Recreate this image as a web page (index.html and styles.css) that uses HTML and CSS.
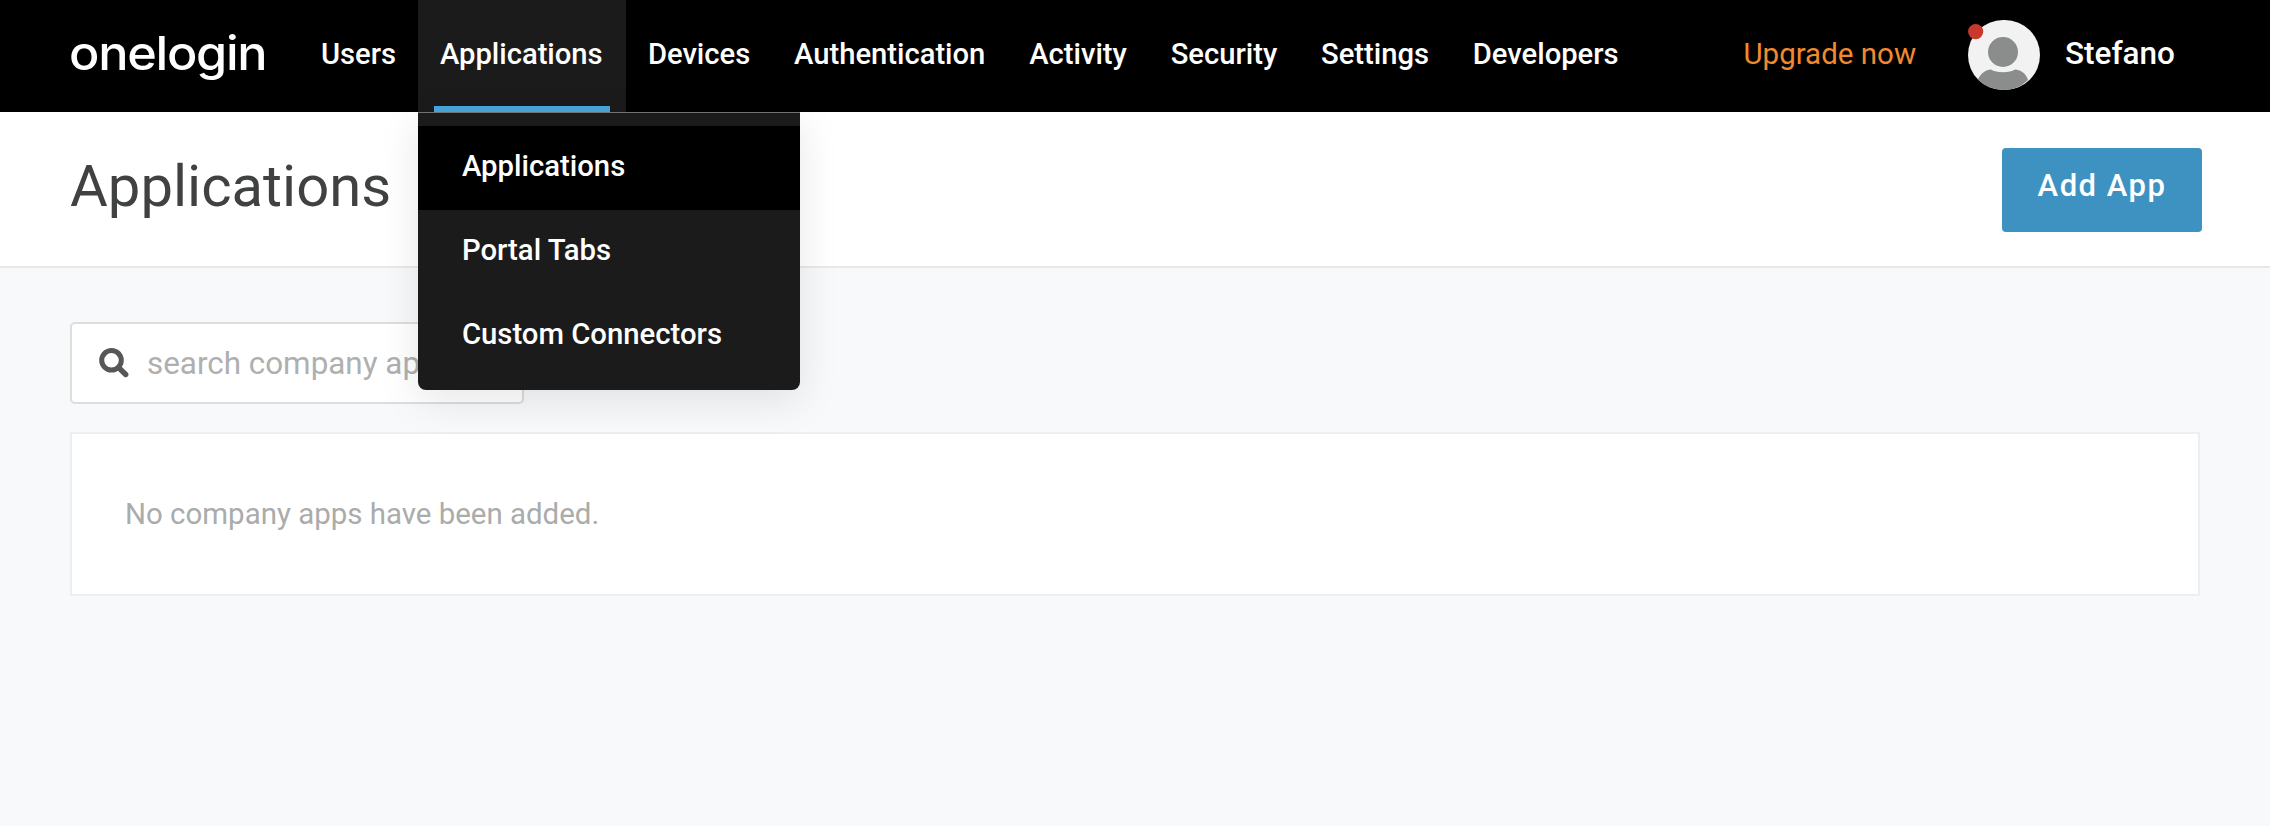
FILE: index.html
```html
<!DOCTYPE html>
<html lang="en">
<head>
<meta charset="utf-8">
<title>Applications</title>
<link rel="stylesheet" href="styles.css">
</head>
<body>
<header class="topbar">
  <a class="logo">onelogin</a>
  <nav class="nav">
    <a class="nav-item">Users</a>
    <div class="nav-item active">Applications
      <div class="menu">
        <a class="menu-item selected">Applications</a>
        <a class="menu-item">Portal Tabs</a>
        <a class="menu-item">Custom Connectors</a>
      </div>
    </div>
    <a class="nav-item">Devices</a>
    <a class="nav-item">Authentication</a>
    <a class="nav-item">Activity</a>
    <a class="nav-item">Security</a>
    <a class="nav-item">Settings</a>
    <a class="nav-item">Developers</a>
  </nav>
  <div class="account">
    <a class="upgrade">Upgrade now</a>
    <svg class="avatar" viewBox="0 0 72 70" width="72" height="70">
      <clipPath id="round"><rect width="72" height="70" rx="35"/></clipPath>
      <g clip-path="url(#round)">
        <rect width="72" height="70" fill="#f2f2f2"/>
        <circle cx="35" cy="32" r="15" fill="#8b8d8c"/>
        <path d="M9.500 60C13 53 18 49.500 23 49.500C28 53 42 53 47 49.500C52 49.500 58 53 60 60C54 66 46 70 36 71C24 71 16 68 9.500 60Z" fill="#8b8d8c"/>
      </g>
      <circle cx="7.700" cy="11.600" r="7.600" fill="#c73a2b"/>
    </svg>
    <span class="user">Stefano</span>
  </div>
</header>
<section class="heading">
  <h1 class="title">Applications</h1>
  <button class="add">Add App</button>
</section>
<main class="content">
  <div class="search">
    <svg width="30" height="30" viewBox="0 0 30 30"><circle cx="12.500" cy="12.300" r="9.800" fill="none" stroke="#555857" stroke-width="5"/><path d="M19.500 19.500L26.700 26.500" stroke="#555857" stroke-width="5.400" stroke-linecap="round"/></svg>
    <span class="placeholder">search company apps</span>
  </div>
  <div class="panel">No company apps have been added.</div>
</main>
</body>
</html>
```
FILE: styles.css
```css
* { box-sizing: border-box; }
body { margin: 0; min-height: 826px; background: #f8f9fb; font-family: Roboto, sans-serif; overflow: hidden; }
.topbar { display: flex; height: 112px; background: #000; color: #fff; padding: 0 95px 0 69px; }
.logo { width: 230px; font: 500 47px/105px Inter, sans-serif; letter-spacing: -1.2px; white-space: nowrap; transform: scaleX(1.072); transform-origin: 0 50%; }
.nav { display: flex; }
.nav-item { position: relative; padding: 0 21.800px 0 22px; font-size: 29.200px; line-height: 108px; font-weight: 500; white-space: nowrap; }
.active { width: 208px; background: #1b1b1b; }
.active::after { content: ""; position: absolute; left: 16px; right: 16px; top: 106px; height: 6px; background: #48a7dc; }
.menu { position: absolute; z-index: 2; left: 0; top: 112px; width: 382px; height: 278px; padding-top: 13px; background: #1b1b1b; border-top: 1px solid #737373; border-radius: 0 0 8px 8px; box-shadow: 0 10px 40px rgba(0, 0, 0, 0.1); }
.menu-item { display: block; height: 84px; padding-left: 44px; font-size: 29.300px; line-height: 80px; }
.selected { background: #000; }
.account { display: flex; margin-left: auto; }
.upgrade { color: #f18a2f; font-size: 29.500px; line-height: 108px; margin-right: 52px; }
.avatar { margin-top: 20px; }
.user { font-size: 31.500px; font-weight: 500; line-height: 107px; margin-left: 25px; }
.heading { display: flex; justify-content: space-between; height: 156px; padding: 36px 68px 0 70px; background: #fff; border-bottom: 2px solid #e8e8e8; }
.title { margin: 0; color: #404241; font-size: 58px; line-height: 76px; font-weight: 400; }
.add { width: 200px; height: 84px; border: 0; border-radius: 4px; padding: 0 0 9px; background: #3e92c1; color: #fff; font: 500 31px Roboto, sans-serif; letter-spacing: 1.5px; }
.content { padding: 54px 70px 0; }
.search { display: flex; align-items: center; width: 454px; height: 82px; padding-left: 27px; gap: 18px; border: 2px solid #dcdddd; border-radius: 5px; background: #fff; }
.placeholder { color: #aeb0af; font-size: 31.400px; padding-top: 1px; white-space: nowrap; }
.panel { margin-top: 28px; height: 164px; padding-left: 53px; border: 2px solid #edeef0; background: #fff; color: #aaacab; font-size: 29.450px; line-height: 160px; }
```
